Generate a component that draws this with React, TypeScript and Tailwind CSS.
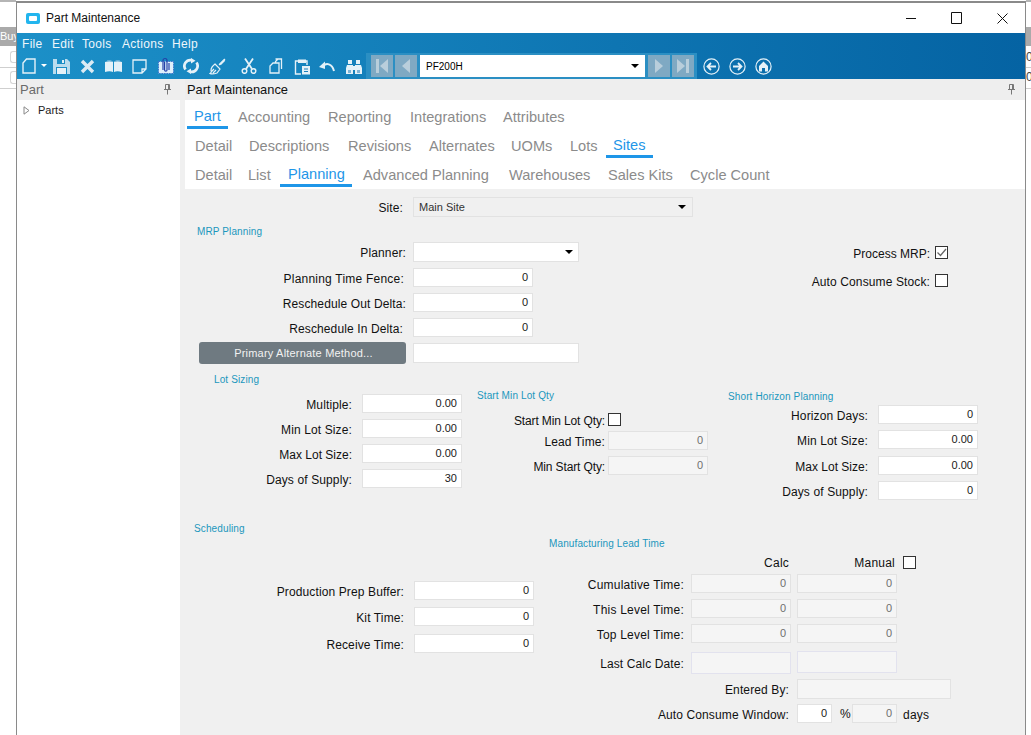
import { ReactNode } from "react";

const ICON = "#e4f1f8";

function Field({ size, value, muted, dropdown }: { size: string; value?: string; muted?: boolean; dropdown?: boolean }) {
  return (
    <div className={`${size} flex shrink-0 items-center justify-end border px-[4px] text-[11px] leading-none ${muted ? "border-[#e2e2e2] bg-[#f5f5f5] text-[#6f6f6f]" : "border-[#e2e2e2] bg-white text-[#1a1a1a]"}`}>
      {value}
      {dropdown && <span className="mr-[1px] h-0 w-0 border-x-[4px] border-t-[4px] border-x-transparent border-t-black" />}
    </div>
  );
}

function Check({ checked, className = "" }: { checked?: boolean; className?: string }) {
  return (
    <div className={`flex size-[13px] shrink-0 items-center justify-center border border-[#333] bg-white ${className}`}>
      {checked && (
        <svg width="11" height="11" viewBox="0 0 11 11" fill="none" stroke="#666" strokeWidth="1.3">
          <path d="M1.5 5.5 4.5 8.5 10 2" />
        </svg>
      )}
    </div>
  );
}

function Row({ label, labelW, gap, track = "tracking-[0.12px]", className = "", children }: { label: string; labelW: string; gap: string; track?: string; className?: string; children: ReactNode }) {
  return (
    <div className={`flex items-center ${className}`}>
      <div className={`${labelW} ${gap} ${track} shrink-0 translate-y-[1px] whitespace-nowrap text-right text-[12px] leading-none text-[#111]`}>{label}</div>
      {children}
    </div>
  );
}

function Heading({ children, className = "" }: { children: ReactNode; className?: string }) {
  return <div className={`h-[14px] whitespace-nowrap text-[10px] leading-[16px] tracking-[0.12px] text-[#1b97bd] ${className}`}>{children}</div>;
}

function Tab({ label, slot, active, bar, pad = "pl-[7px]" }: { label: string; slot: string; active?: boolean; bar?: string; pad?: string }) {
  return (
    <div className={`${slot} h-[29px] shrink-0`}>
      <div className={`h-[29px] whitespace-nowrap ${pad} text-[14.6px] leading-[20px] ${active ? `${bar} border-b-[3px] border-[#1e96e8] pt-[6px] text-[#1e96e8]` : "pt-[7px] text-[#8b8b8b]"}`}>
        {label}
      </div>
    </div>
  );
}

function Pin() {
  return (
    <svg width="9" height="11" viewBox="0 0 9 11" fill="none" stroke="#777" strokeWidth="1">
      <path d="M2.5.5h4v5h-4zM1 5.5h7M4.5 6v4.5M5.5 1v4" />
    </svg>
  );
}

function NavButton({ dir, end }: { dir: "left" | "right"; end?: boolean }) {
  return (
    <div className="flex h-[22px] w-[22px] shrink-0 items-center justify-center gap-[1px] bg-[#7fa9c3]">
      {end && dir === "left" && <div className="h-[14px] w-[3px] bg-[#b9cedb]" />}
      <div className={`h-0 w-0 border-y-[7px] border-y-transparent ${dir === "left" ? "border-r-[8px] border-r-[#b9cedb]" : "border-l-[8px] border-l-[#b9cedb]"}`} />
      {end && dir === "right" && <div className="h-[14px] w-[3px] bg-[#b9cedb]" />}
    </div>
  );
}

function CircleIcon({ children, className = "" }: { children: ReactNode; className?: string }) {
  return (
    <svg className={`shrink-0 ${className}`} width="17" height="17" viewBox="0 0 17 17" fill="none" stroke={ICON} strokeWidth="1.2">
      <circle cx="8.5" cy="8.5" r="7.6" />
      {children}
    </svg>
  );
}

function Toolbar() {
  return (
    <div className="flex h-[26px] items-center">
      <svg className="ml-[5px] shrink-0" width="14" height="16" viewBox="0 0 14 16" fill="none" stroke={ICON} strokeWidth="1.4">
        <path d="M4.5 1H13v14H1V5z" />
      </svg>
      <div className="ml-[5px] mt-[-1px] h-0 w-0 shrink-0 border-x-[3px] border-t-[3px] border-x-transparent border-t-white" />
      <svg className="ml-[6px] shrink-0" width="17" height="16" viewBox="0 0 17 16">
        <path fill="#b9dcee" d="M0 1h14l3 3v12H0z" />
        <path fill="#1b8ec6" d="M4 1h8v5H4zM3 9h11v7H3z" />
        <path fill={ICON} d="M9 2h2v3H9zM4 10h9v6H4z" />
      </svg>
      <svg className="ml-[10px] shrink-0" width="15" height="15" viewBox="0 0 15 15" stroke="#dcebf4" strokeWidth="3.4">
        <path d="M2 2l11 11M13 2 2 13" />
      </svg>
      <svg className="ml-[10px] shrink-0" width="17" height="14" viewBox="0 0 17 14">
        <path fill="#e4f1f8" d="M0 3c3-1 6-1 8 0v10c-2-1-5-1-8 0zM9 3c2-1 5-1 8 0v10c-3-1-6-1-8 0z" />
        <path fill="#7fbbdb" d="M2 1.5c2-.6 4-.6 6 1v.5C6 2 4 2 2 2.4zM15 1.500c-2-.6-4-.6-6 1v.5c2-1 4-1 6-.6z" />
      </svg>
      <svg className="ml-[10px] shrink-0" width="15" height="15" viewBox="0 0 15 15" fill="none" stroke={ICON} strokeWidth="1.3">
        <path d="M1 1h13v9l-4 4H1zM10 14v-4h4" />
      </svg>
      <svg className="ml-[11px] shrink-0" width="16" height="18" viewBox="0 0 16 18" fill="none">
        <path fill="#dff0fb" stroke="#2f63c8" strokeWidth=".8" strokeDasharray="1.500 1" d="M.5 4.500h15v12H.5z" />
        <path stroke="#2440a8" strokeWidth="1.200" d="M5 13V3.500a2 2 0 0 1 4 0V13a1.200 1.200 0 0 1-2.400 0V5M11 6v7" />
      </svg>
      <svg className="ml-[9px] shrink-0" width="16" height="16" viewBox="0 0 16 16" fill="none" stroke={ICON} strokeWidth="2.700">
        <path d="M2.500 11.500A6 6 0 0 1 8.500 2.200M13.500 4.500A6 6 0 0 1 7.500 13.800" />
        <path fill={ICON} stroke="none" d="M8 0v5.500l4.500-2.700zM8 16v-5.500l-4.500 2.700z" />
      </svg>
      <svg className="ml-[10px] shrink-0" width="17" height="17" viewBox="0 0 17 17" fill="none" stroke={ICON} strokeWidth="1.2">
        <path d="M10 7 16 1M6 6l5 5-3 4c-2 .7-5 1.500-7 .5 1.500-1 1.500-2.500 1-3 0-2 2-5 4-6.500zM4 15l3-3M2.500 13.500 5 11" />
        <path strokeWidth="2.200" d="M11 6.500 15.500 2" />
      </svg>
      <svg className="ml-[15px] shrink-0" width="16" height="16" viewBox="0 0 16 16" fill="none" stroke={ICON} strokeWidth="1.500">
        <circle cx="3.500" cy="13" r="2.300" />
        <circle cx="12.500" cy="13" r="2.300" />
        <path d="M5 11 12 .5M11 11 4 .5" strokeWidth="1.800" />
      </svg>
      <svg className="ml-[12px] shrink-0" width="14" height="16" viewBox="0 0 14 16" fill="none" stroke={ICON} strokeWidth="1.300">
        <path d="M6.500 1H12.500V11M9 1 6.500 3.500V5" />
        <path d="M4 5h6v10H1V8z" />
      </svg>
      <svg className="ml-[11px] shrink-0" width="16" height="17" viewBox="0 0 16 17" fill="none" stroke={ICON} strokeWidth="1.400">
        <path d="M5 3H1.500v13H7M11 3h2v4" />
        <path fill={ICON} stroke="none" d="M4 1.500h8V5H4zM8 8h8v8.500H8z" />
        <path stroke="#1b80bb" strokeWidth="1" d="M10 11h4M10 13.500h4" />
      </svg>
      <svg className="ml-[9px] shrink-0" width="16" height="13" viewBox="0 0 16 13" fill="none" stroke={ICON} strokeWidth="2">
        <path d="M4 6c3-3 9-3 11 5" />
        <path fill={ICON} stroke="none" d="M0 7 6 1.500V9z" />
      </svg>
      <svg className="ml-[11px] shrink-0" width="16" height="15" viewBox="0 0 16 15">
        <path fill={ICON} d="M2 1h4v4H2zM10 1h4v4h-4zM1 6h6v9H0V9zM9 6h6l1 3v6H9zM7 7h2v4H7z" />
        <path fill="#1678b3" d="M2 11h3v3H2zM11 11h3v3h-3z" opacity=".5" />
      </svg>
      <div className="ml-[4px] flex h-[26px] w-[331px] shrink-0 items-center bg-[#2b8fc3] pl-[5px]">
        <NavButton dir="left" end />
        <div className="ml-[2px]"><NavButton dir="left" /></div>
        <div className="ml-[3px] flex h-[22px] w-[225px] shrink-0 items-center justify-between bg-white pl-[6px] pr-[6px] text-[10px] text-black">
          PF200H
          <span className="h-0 w-0 border-x-[4px] border-t-[4px] border-x-transparent border-t-black" />
        </div>
        <div className="ml-[3px]"><NavButton dir="right" /></div>
        <div className="ml-[2px]"><NavButton dir="right" end /></div>
      </div>
      <CircleIcon className="ml-[6px]"><path d="M13 8.500H5M8 5 4.500 8.500 8 12" strokeWidth="1.800" /></CircleIcon>
      <CircleIcon className="ml-[9px]"><path d="M4 8.500h8M9 5l3.500 3.500L9 12" strokeWidth="1.800" /></CircleIcon>
      <CircleIcon className="ml-[9px]"><path fill={ICON} stroke="none" d="M8.500 3.500 13 8v5.500H10V10H7v3.500H4V8z" /></CircleIcon>
    </div>
  );
}

function OutsideLeft() {
  return (
    <div className="w-[16px] shrink-0 overflow-hidden bg-white">
      <div className="h-[2px] bg-[#b5b5b5]" />
      <div className="mt-[25px] h-[19px] whitespace-nowrap bg-[#aaaaaa] text-[11px] leading-[19px] text-white">Buy</div>
      <div className="ml-[10px] mt-[5px] h-[12px] rounded-l-[3px] border border-r-0 border-[#d5d5d5]" />
      <div className="mt-[4px] h-[1px] bg-[#cfcfcf]" />
      <div className="ml-[10px] mt-[3px] h-[13px] rounded-l-[3px] border border-r-0 border-[#d5d5d5]" />
      <div className="mt-[4px] h-[1px] bg-[#cfcfcf]" />
    </div>
  );
}

function OutsideRight() {
  return (
    <div className="w-[5px] shrink-0 overflow-hidden bg-white">
      <div className="h-[2px] bg-[#b5b5b5]" />
      <div className="mt-[25px] h-[19px] bg-[#aaaaaa]" />
      <div className="mt-[5px] h-[12px] text-[12px] leading-[12px] text-[#444]">0</div>
      <div className="mt-[4px] h-[1px] bg-[#cfcfcf]" />
      <div className="mt-[3px] h-[13px] text-[12px] leading-[13px] text-[#444]">0</div>
      <div className="mt-[4px] h-[1px] bg-[#cfcfcf]" />
    </div>
  );
}

function PlanningForm() {
  const top = "w-[218px]";
  const lotLabel = "w-[167px]";
  const wide = "tracking-[0.22px]";
  const tight = "tracking-[-0.13px]";
  return (
    <div className="h-[546px] overflow-hidden bg-[#f0f0f0] pt-[8px]">
      <Row label="Site:" labelW={top} gap="mr-[10px]" className="h-[20px]">
        <div className="flex h-[20px] w-[280px] items-center justify-between border border-[#e2e2e2] bg-[#f0f0f0] pl-[5px] pr-[6px] text-[11px] text-[#333]">
          Main Site
          <span className="h-0 w-0 border-x-[4px] border-t-[4px] border-x-transparent border-t-black" />
        </div>
      </Row>

      <div className="flex h-[147px]">
        <div className="w-[394px] shrink-0">
          <Heading className="ml-[12px] mt-[7px]">MRP Planning</Heading>
          <Row label="Planner:" labelW="w-[221px]" gap="mr-[7px]" className="mt-[4px] h-[20px]">
            <Field size="w-[166px] h-[20px]" dropdown />
          </Row>
          <Row label="Planning Time Fence:" labelW="w-[219px]" gap="mr-[9px]" track={wide} className="mt-[6px] h-[19px]">
            <Field size="w-[120px] h-[19px]" value="0" />
          </Row>
          <Row label="Reschedule Out Delta:" labelW="w-[221px]" gap="mr-[7px]" className="mt-[6px] h-[19px]">
            <Field size="w-[120px] h-[19px]" value="0" />
          </Row>
          <Row label="Reschedule In Delta:" labelW="w-[218px]" gap="mr-[10px]" className="mt-[6px] h-[19px]">
            <Field size="w-[120px] h-[19px]" value="0" />
          </Row>
          <div className="mt-[5px] flex h-[22px] items-center pl-[14px]">
            <button className="h-[22px] w-[207px] shrink-0 rounded-[3px] bg-[#6f7a81] pl-[2px] text-[11px] tracking-[0.2px] text-[#f2f2f2]">Primary Alternate Method...</button>
            <div className="ml-[7px] h-[20px] w-[166px] border border-[#e2e2e2] bg-white" />
          </div>
        </div>
        <div className="shrink-0 pt-[29px]">
          <Row label="Process MRP:" labelW="w-[351px]" gap="mr-[5px]" track="tracking-normal" className="h-[13px]">
            <Check checked />
          </Row>
          <Row label="Auto Consume Stock:" labelW="w-[351px]" gap="mr-[5px]" className="mt-[15px] h-[13px]">
            <Check />
          </Row>
        </div>
      </div>

      <div className="flex h-[150px]">
        <div className="w-[285px] shrink-0">
          <Heading className="ml-[29px] mt-[8px]">Lot Sizing</Heading>
          <div className="mt-[8px] flex flex-col gap-[6px]">
            <Row label="Multiple:" labelW={lotLabel} gap="mr-[10px]" className="h-[19px]"><Field size="w-[100px] h-[19px]" value="0.00" /></Row>
            <Row label="Min Lot Size:" labelW={lotLabel} gap="mr-[10px]" className="h-[19px]"><Field size="w-[100px] h-[19px]" value="0.00" /></Row>
            <Row label="Max Lot Size:" labelW={lotLabel} gap="mr-[10px]" track="tracking-normal" className="h-[19px]"><Field size="w-[100px] h-[19px]" value="0.00" /></Row>
            <Row label="Days of Supply:" labelW={lotLabel} gap="mr-[10px]" className="h-[19px]"><Field size="w-[100px] h-[19px]" value="30" /></Row>
          </div>
        </div>
        <div className="w-[250px] shrink-0">
          <Heading className="ml-[7px] mt-[24px]">Start Min Lot Qty</Heading>
          <Row label="Start Min Lot Qty:" labelW="w-[135px]" gap="mr-[3px]" track={tight} className="mt-[11px] h-[13px]"><Check /></Row>
          <Row label="Lead Time:" labelW="w-[135px]" gap="mr-[3px]" className="mt-[5px] h-[19px]"><Field size="w-[100px] h-[19px]" value="0" muted /></Row>
          <Row label="Min Start Qty:" labelW="w-[135px]" gap="mr-[3px]" track={tight} className="mt-[6px] h-[19px]"><Field size="w-[100px] h-[19px]" value="0" muted /></Row>
        </div>
        <div className="shrink-0">
          <Heading className="ml-[8px] mt-[25px]">Short Horizon Planning</Heading>
          <Row label="Horizon Days:" labelW="w-[148px]" gap="mr-[10px]" className="mt-[2px] h-[19px]"><Field size="w-[100px] h-[19px]" value="0" /></Row>
          <Row label="Min Lot Size:" labelW="w-[148px]" gap="mr-[10px]" className="mt-[6px] h-[19px]"><Field size="w-[100px] h-[19px]" value="0.00" /></Row>
          <Row label="Max Lot Size:" labelW="w-[148px]" gap="mr-[10px]" track="tracking-normal" className="mt-[7px] h-[19px]"><Field size="w-[100px] h-[19px]" value="0.00" /></Row>
          <Row label="Days of Supply:" labelW="w-[148px]" gap="mr-[10px]" className="mt-[6px] h-[19px]"><Field size="w-[100px] h-[19px]" value="0" /></Row>
        </div>
      </div>

      <div className="flex">
        <div className="w-[364px] shrink-0">
          <Heading className="ml-[9px] mt-[7px]">Scheduling</Heading>
          <Row label="Production Prep Buffer:" labelW="w-[219px]" gap="mr-[10px]" className="mt-[46px] h-[19px]"><Field size="w-[120px] h-[19px]" value="0" /></Row>
          <Row label="Kit Time:" labelW="w-[219px]" gap="mr-[10px]" className="mt-[7px] h-[19px]"><Field size="w-[120px] h-[19px]" value="0" /></Row>
          <Row label="Receive Time:" labelW="w-[219px]" gap="mr-[10px]" className="mt-[8px] h-[19px]"><Field size="w-[120px] h-[19px]" value="0" /></Row>
        </div>
        <div className="shrink-0">
          <Heading className="mt-[22px]">Manufacturing Lead Time</Heading>
          <div className="mt-[6px] flex h-[13px] items-center text-[12px] leading-none tracking-[0.22px] text-[#111]">
            <div className="w-[240px] text-right">Calc</div>
            <div className="w-[106px] text-right">Manual</div>
            <Check className="ml-[8px]" />
          </div>
          <Row label="Cumulative Time:" labelW="w-[135px]" gap="mr-[7px]" track={wide} className="mt-[5px] h-[19px]">
            <Field size="w-[100px] h-[19px]" value="0" muted />
            <div className="ml-[6px]"><Field size="w-[100px] h-[19px]" value="0" muted /></div>
          </Row>
          <Row label="This Level Time:" labelW="w-[135px]" gap="mr-[7px]" track={wide} className="mt-[6px] h-[19px]">
            <Field size="w-[100px] h-[19px]" value="0" muted />
            <div className="ml-[6px]"><Field size="w-[100px] h-[19px]" value="0" muted /></div>
          </Row>
          <Row label="Top Level Time:" labelW="w-[135px]" gap="mr-[7px]" track={wide} className="mt-[6px] h-[19px]">
            <Field size="w-[100px] h-[19px]" value="0" muted />
            <div className="ml-[6px]"><Field size="w-[100px] h-[19px]" value="0" muted /></div>
          </Row>
          <Row label="Last Calc Date:" labelW="w-[135px]" gap="mr-[7px]" className="mt-[9px] h-[22px]">
            <div className="h-[22px] w-[100px] border border-[#e2e2ee] bg-[#f5f5f5]" />
            <div className="ml-[6px] h-[22px] w-[100px] -translate-y-[1px] border border-[#e2e2ee] bg-[#f5f5f5]" />
          </Row>
          <Row label="Entered By:" labelW="w-[240px]" gap="mr-[8px]" className="mt-[5px] h-[20px]">
            <Field size="w-[154px] h-[20px]" muted />
          </Row>
          <Row label="Auto Consume Window:" labelW="w-[240px]" gap="mr-[8px]" className="mt-[5px] h-[19px]">
            <Field size="w-[35px] h-[19px]" value="0" />
            <div className="ml-[8px] w-[12px] text-[12px] text-[#111]">%</div>
            <Field size="w-[45px] h-[19px]" value="0" muted />
            <div className="ml-[6px] translate-y-[1px] text-[12px] tracking-[0.22px] text-[#111]">days</div>
          </Row>
        </div>
      </div>
    </div>
  );
}

export default function App() {
  return (
    <div className="flex h-[735px] w-[1031px] overflow-hidden bg-white font-['Liberation_Sans',Arial,sans-serif]">
      <OutsideLeft />
      <div className="mt-[1px] flex w-[1010px] shrink-0 flex-col border-x border-t-2 border-[#8a8a8a] bg-white">
        <div className="flex h-[30px] shrink-0 items-center">
          <div className="ml-[9px] flex h-[11px] w-[14px] items-center justify-center rounded-[2px] bg-[#22b5ee]">
            <div className="h-[5px] w-[8px] rounded-[1px] bg-white" />
          </div>
          <span className="ml-[6px] text-[12px] text-[#111]">Part Maintenance</span>
          <div className="ml-auto flex items-center">
            <svg width="11" height="11" viewBox="0 0 11 11" stroke="#111" strokeWidth="1"><path d="M0 5.500h10" /></svg>
            <svg className="ml-[34px]" width="11" height="12" viewBox="0 0 11 12" fill="none" stroke="#111" strokeWidth="1"><path d="M.5.5h10v11H.5z" /></svg>
            <svg className="ml-[35px] mr-[17px]" width="11" height="11" viewBox="0 0 11 11" stroke="#111" strokeWidth="1"><path d="M.5.5l10 10M10.500.5l-10 10" /></svg>
          </div>
        </div>

        <div className="h-[46px] shrink-0 bg-gradient-to-r from-[#1c90c8] to-[#0563a3]">
          <div className="flex h-[20px] items-center pt-[2px] text-[12px] tracking-[0.3px] text-[#eef6fb]">
            <span className="ml-[5px] w-[29px]">File</span>
            <span className="ml-[1px] w-[30px]">Edit</span>
            <span className="w-[39px]">Tools</span>
            <span className="ml-[1px] w-[49px]">Actions</span>
            <span className="ml-[1px]">Help</span>
          </div>
          <Toolbar />
        </div>

        <div className="flex min-h-0 flex-1">
          <div className="w-[163px] shrink-0">
            <div className="flex h-[21px] items-center justify-between bg-[#eeeeee] pl-[3px] pr-[8px] text-[13px] text-[#6a6a6a]">
              Part
              <Pin />
            </div>
            <div className="flex h-[21px] items-center pl-[6px] text-[11px] text-[#222]">
              <svg width="7" height="9" viewBox="0 0 7 9" fill="none" stroke="#888"><path d="M1 .8 6 4.500 1 8.200z" /></svg>
              <span className="ml-[8px]">Parts</span>
            </div>
          </div>
          <div className="w-[5px] shrink-0 bg-[#f0f0f0]" />
          <div className="min-w-0 flex-1">
            <div className="flex h-[21px] items-center justify-between bg-[#eeeeee] pl-[2px] pr-[9px] text-[12.9px] text-[#111]">
              Part Maintenance
              <Pin />
            </div>
            <div className="h-[89px] bg-white pl-[2px]">
              <div className="flex">
                <Tab label="Part" slot="w-[44px]" active bar="w-[41px]" />
                <Tab label="Accounting" slot="w-[90px]" />
                <Tab label="Reporting" slot="w-[82px]" />
                <Tab label="Integrations" slot="w-[93px]" />
                <Tab label="Attributes" slot="w-[100px]" />
              </div>
              <div className="flex pl-[1px]">
                <Tab label="Detail" slot="w-[54px]" />
                <Tab label="Descriptions" slot="w-[99px]" />
                <Tab label="Revisions" slot="w-[81px]" />
                <Tab label="Alternates" slot="w-[82px]" />
                <Tab label="UOMs" slot="w-[59px]" />
                <Tab label="Lots" slot="w-[43px]" />
                <Tab label="Sites" slot="w-[47px]" active bar="w-[47px]" />
              </div>
              <div className="flex pl-[1px]">
                <Tab label="Detail" slot="w-[53px]" />
                <Tab label="List" slot="w-[39px]" />
                <Tab label="Planning" slot="w-[76px]" active bar="w-[72px]" pad="pl-[8px]" />
                <Tab label="Advanced Planning" slot="w-[146px]" />
                <Tab label="Warehouses" slot="w-[99px]" />
                <Tab label="Sales Kits" slot="w-[82px]" />
                <Tab label="Cycle Count" slot="w-[100px]" />
              </div>
            </div>
            <PlanningForm />
          </div>
        </div>
      </div>
      <OutsideRight />
    </div>
  );
}
